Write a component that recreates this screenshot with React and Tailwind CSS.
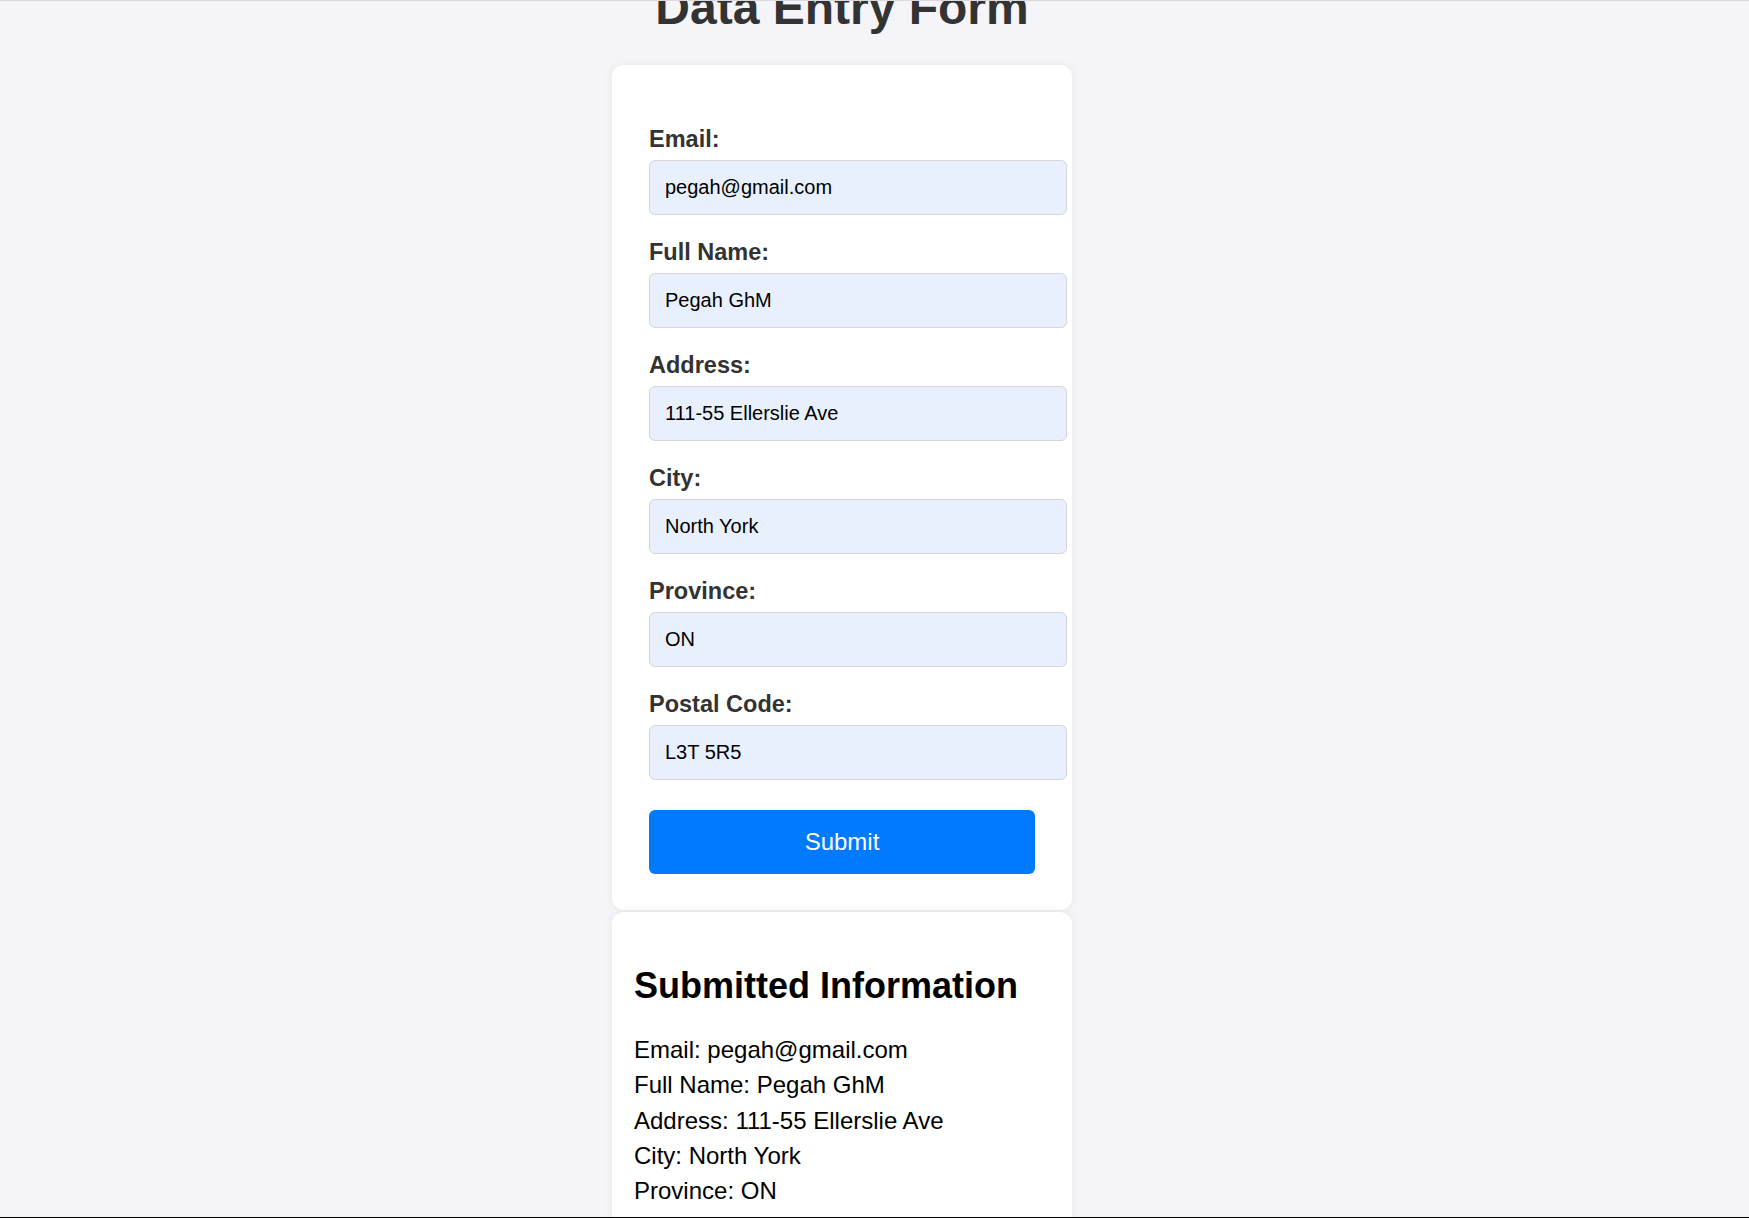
import React from "react";

const fields = [
  ["Email:", "pegah@gmail.com"],
  ["Full Name:", "Pegah GhM"],
  ["Address:", "111-55 Ellerslie Ave"],
  ["City:", "North York"],
  ["Province:", "ON"],
  ["Postal Code:", "L3T 5R5"],
];

const info = [
  "Email: pegah@gmail.com",
  "Full Name: Pegah GhM",
  "Address: 111-55 Ellerslie Ave",
  "City: North York",
  "Province: ON",
  "Postal Code: L3T 5R5",
];

export default function App() {
  return (
    <div className="h-[1218px] overflow-hidden box-border bg-[#f4f4f9] border-t border-t-[#d9d9de] border-b border-b-black font-['Liberation_Sans',Arial,sans-serif]">
      <div className="w-[1684px] flex flex-col items-center">
        <h1 className="mt-[-17px] text-[48px] leading-[48px] font-bold text-[#333]">
          Data Entry Form
        </h1>
        <div className="mt-[33px] w-[460px] rounded-[12px] bg-white pt-[61px] pl-[37px] pb-[36px] shadow-[0_0_10px_rgba(0,0,0,0.06)]">
          <form className="flex flex-col" onSubmit={(e) => e.preventDefault()}>
            {fields.map(([label, value], i) => (
              <div key={label} className={i < fields.length - 1 ? "mb-[24.5px]" : "mb-[30.5px]"}>
                <label className="block text-[23.5px] leading-[27px] font-bold text-[#333]">
                  {label}
                </label>
                <input
                  readOnly
                  value={value}
                  className="mt-[7px] block box-border h-[54.5px] w-[418px] rounded-[6px] border border-[#d6d6d9] bg-[#e8f0fe] px-[15px] text-[20px] text-black outline-none"
                />
              </div>
            ))}
            <button
              type="submit"
              className="h-[64px] w-[386px] rounded-[6px] bg-[#007bff] text-[24px] text-white"
            >
              Submit
            </button>
          </form>
        </div>
        <div className="mt-[2px] w-[460px] rounded-[12px] bg-white pt-[55.5px] pl-[22px] pb-[30px] shadow-[0_0_10px_rgba(0,0,0,0.06)]">
          <h2 className="text-[36px] leading-[36px] font-bold text-black">
            Submitted Information
          </h2>
          <div className="mt-[28.5px]">
            {info.map((line) => (
              <p key={line} className="text-[24px] leading-[35.3px] text-black">
                {line}
              </p>
            ))}
          </div>
        </div>
      </div>
    </div>
  );
}
